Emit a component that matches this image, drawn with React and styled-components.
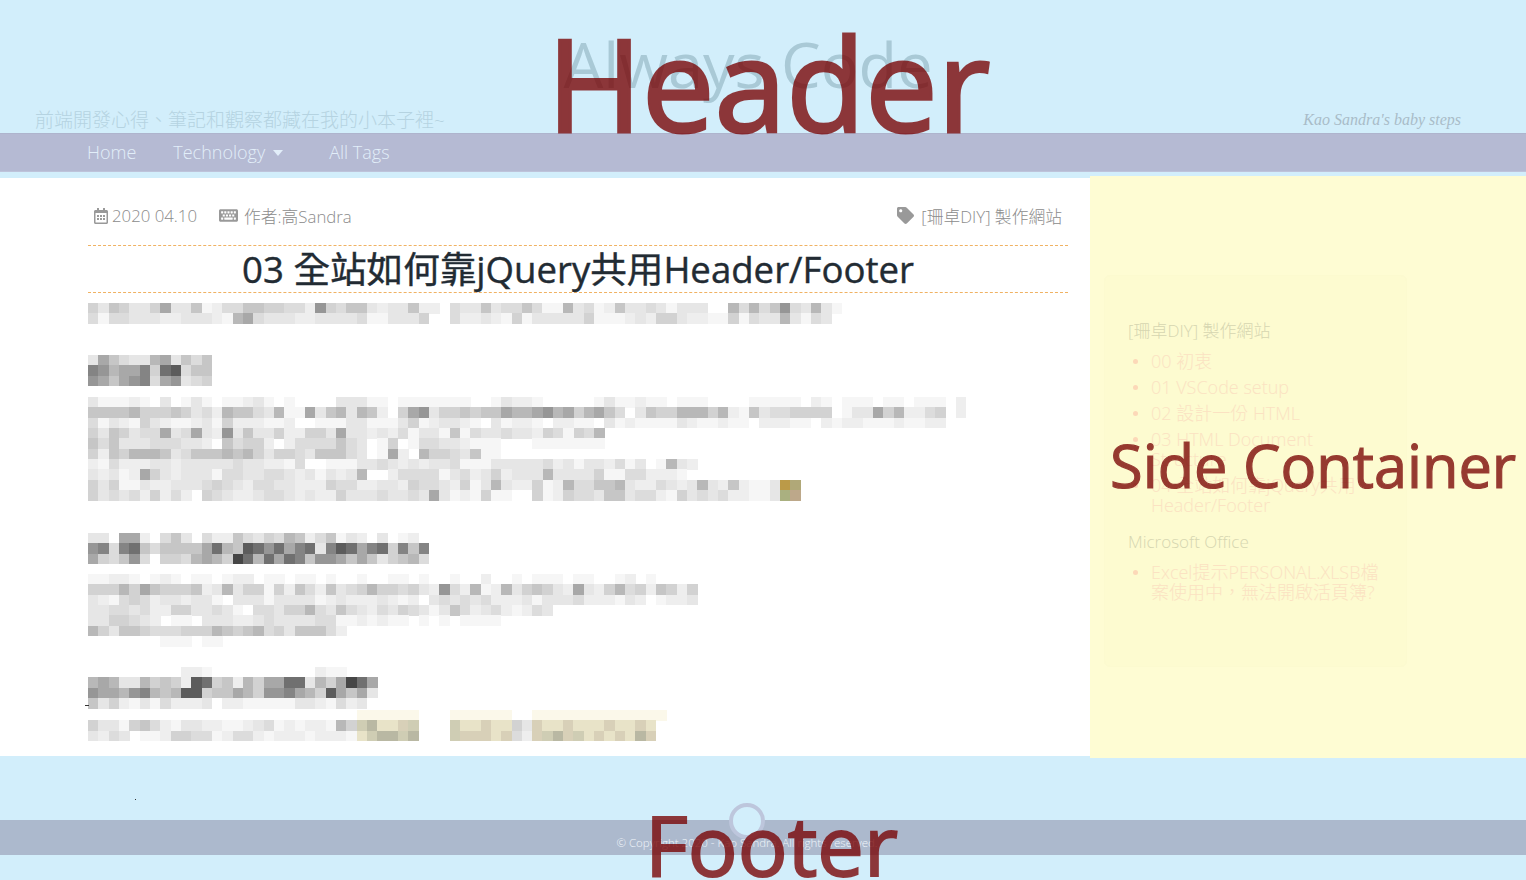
import React from "react";
import styled, { createGlobalStyle } from "styled-components";
import { FaRegCalendarAlt, FaKeyboard, FaTag } from "react-icons/fa";

const UI = `"Open Sans", "Noto Sans CJK TC", sans-serif`;

const Global = createGlobalStyle`
  html, body { margin: 0; padding: 0; background: #d2eefb; overflow: hidden; }
  body { font-family: ${UI}; }
  * { box-sizing: border-box; }
`;

const Page = styled.div`
  position: relative;
  width: 1526px;
  height: 880px;
  overflow: hidden;
  display: flex;
  flex-direction: column;
`;

const Header = styled.header`
  height: 133px;
  display: grid;
  grid-template-columns: 1fr auto 1fr;
  padding: 0 65px 0 35px;
`;
const Slogan = styled.div`
  align-self: end;
  margin-bottom: -1px;
  font-size: 19px;
  line-height: 28px;
  color: #b5d3e1;
  font-weight: 300;
  white-space: nowrap;
`;
const Brand = styled.div`
  margin-top: 26px;
  font-size: 63px;
  line-height: 76px;
  color: #a9c9d6;
  font-weight: 400;
  white-space: nowrap;
`;
const Motto = styled.div`
  align-self: end;
  justify-self: end;
  margin-bottom: -1px;
  font-family: "Liberation Serif", serif;
  font-style: italic;
  font-size: 16px;
  line-height: 28px;
  color: #a9bcc8;
  white-space: nowrap;
`;

const Nav = styled.nav`
  height: 39px;
  background: #b5bad3;
  border-top: 1px solid #aeb4cd;
  border-bottom: 1px solid #bec3da;
  display: flex;
  align-items: center;
  padding: 0 0 2px 87px;
  gap: 37px;
`;
const NavLink = styled.a`
  font-size: 18px;
  font-weight: 300;
  color: #e2eef9;
  display: flex;
  align-items: center;
  gap: 8px;
  white-space: nowrap;
`;
const Caret = styled.span`
  width: 0;
  height: 0;
  margin: 2px 9px 0 0;
  border-left: 5.5px solid transparent;
  border-right: 5.5px solid transparent;
  border-top: 6px solid #e2eef9;
`;

const Main = styled.div`
  margin-top: 6px;
  height: 578px;
  display: flex;
  background: #fff;
`;
const Article = styled.main`
  position: relative;
  width: 1090px;
  padding: 0 22px 0 88px;
`;
const Side = styled.aside`
  flex: 1;
  margin: -2px 0;
  padding: 99px 0 0 14px;
  background: #fefcd3;
`;
const SideCard = styled.div`
  width: 303px;
  height: 392px;
  padding: 44px 24px 0 23px;
  border: 1px solid #fcfacf;
  border-radius: 6px;
  background: #fdfbd0;
`;
const SideTitle = styled.div`
  font-size: 17px;
  line-height: 22px;
  color: #d6d6b0;
  font-weight: 300;
  margin-top: ${(p) => p.$before || 0}px;
  margin-bottom: 9px;
`;
const SideList = styled.ul`
  margin: 0;
  padding: 0 0 0 23px;
  list-style: none;
`;
const SideItem = styled.li`
  position: relative;
  font-size: 18px;
  line-height: 20px;
  color: #fbe2c2;
  font-weight: 300;
  margin-bottom: 6px;
  &::before {
    content: "";
    position: absolute;
    left: -18px;
    top: 8px;
    width: 5px;
    height: 5px;
    border-radius: 50%;
    background: #fcd8b8;
  }
`;

const Meta = styled.div`
  height: 68px;
  padding: 8px 6px 0 5px;
  display: flex;
  align-items: center;
  color: #8c8c8c;
  font-size: 16.8px;
  font-weight: 300;
  border-bottom: 1px dashed #f0b263;
`;
const MetaItem = styled.span`
  display: inline-flex;
  align-items: center;
  gap: ${(p) => p.$gap}px;
  margin-right: 22px;
  white-space: nowrap;
  &:last-child { margin-right: 0; margin-left: auto; }
  svg { color: #999; font-size: ${(p) => p.$icon}px; }
`;
const Title = styled.h1`
  margin: 0;
  height: 47px;
  line-height: 46px;
  font-size: 36.6px;
  font-weight: 400;
  -webkit-text-stroke: 0.4px #222b33;
  text-align: center;
  color: #222b33;
  white-space: nowrap;
  border-bottom: 1px dashed #f0b263;
`;

const MosaicSvg = styled.svg`
  display: block;
  margin-top: ${(p) => p.$top}px;
  filter: blur(0.6px);
  overflow: visible;
`;

const SHADES = {
  0: 255, 1: 246, 2: 238, 3: 230, 4: 220, 5: 210, 6: 198, 7: 184,
  8: 168, 9: 150, a: 132, b: 112, c: 92, d: 70,
};
const TINTS = {
  e: "#fbf8ea", g: "#e8e3c8", h: "#cfcdb4", i: "#b9b8a3", j: "#d8d0b8", k: "#bb9a48", l: "#b0a878", m: "#aab080", n: "#bda88a",
};
const CELL = 10.33;

function Mosaic({ top, rows }) {
  const w = Math.max(...rows.map((r) => r.length)) * CELL;
  const h = rows.length * CELL;
  return (
    <MosaicSvg $top={top} width={w} height={h} viewBox={`0 0 ${w} ${h}`} shapeRendering="crispEdges">
      {rows.flatMap((row, y) =>
        [...row].map((c, x) => {
          if (c === "0") return null;
          const fill = TINTS[c] || `rgb(${SHADES[c]},${SHADES[c]},${SHADES[c]})`;
          return <rect key={`${y}-${x}`} x={x * CELL} y={y * CELL} width={CELL + 0.3} height={CELL + 0.3} fill={fill} />;
        })
      )}
    </MosaicSvg>
  );
}

const BLOCKS = [
  { top: 10, rows: [
    "5365335833612446655442954663233622" + "043363446411734126334313330074746943731",
    "4144333223332178433322333341133350" + "042232151333335111232553221151433731430",
  ]},
  { top: 31, rows: [
    "386433783646",
    "a9788a5bc466",
    "98689a489345",
  ]},
  { top: 11, rows: [
    "3111210301310112310100003331101111111001" + "322100000131121101110000111110210111011011102",
    "6666755565342766437118367376205893556566" + "877897857864036557775721634455550133857224502",
    "4132153211231522211200111331113512332103" + "1221022110312111132112110222110212211121122",
    "5365344834832936335225538332324133161433" + "4332541547",
    "6463334443320645520244446430150144332111" + "0001111111",
    "5265777634666767535543666430182075543611",
    "21422233233333433221400111334323233411133333423133241301732",
    "3231285323331443344323132370024444134235" + "233373333511442221",
    "5351132233345432443322254422332544325137" + "322512744667322432373262113kl",
    "5343425242054322344323225333433438312151" + "100512544366344215343422113mn",
  ]},
  { top: 33, rows: [
    "330882046304226435476246132030120",
    "9a4ab6466668b76cb9b8ab3acb8ab5a6a",
    "85469405547875db7b8ba699868635674",
  ]},
  { top: 10, rows: [
    "11221012101101220110110100100110100100200101110110012010000",
    "55575865556237355152642634575545329427127356532832574526525",
    "32145423323310333133331232223212034343422231333422213201223",
    "334434225533431044355743643243543136423421243",
    "3355432011033322343333441121211010101111000000",
    "7536654445557656745366642",
    "0000000111011000",
  ]},
  { top: 21, rows: [
    "0000000002210000000000211",
    "7873375652cb5627588bb3758db8",
    "98879a767cc56687599a875c8683",
    "635213142223022111113321423",
  ]},
  { top: 1, rows: [
    "00000000000000000000000000eeeeee000eeeeee00eeeeeeeeeeeee",
    "53315642133221123412122175" + "higgjh" + "000" + "hggjgg" + "53" + "jggjgggjggjg",
    "32430112554412442122212221" + "ghiihi" + "000" + "hjjjgj" + "42" + "jhijhgjgjgij",
  ]},
];

const Label = styled.div`
  position: absolute;
  left: ${(p) => p.$x}px;
  top: ${(p) => p.$y}px;
  font-size: ${(p) => p.$size}px;
  line-height: 1;
  color: #780000;
  -webkit-text-stroke: ${(p) => p.$stroke}px #780000;
  opacity: 0.77;
  white-space: nowrap;
  font-weight: 500;
`;

const Footer = styled.footer`
  position: relative;
  flex: 1;
  padding-top: 64px;
`;
const FooterBar = styled.div`
  height: 35px;
  background: #acb9cd;
  padding: 14px 32px 0 0;
  text-align: center;
  font-size: 11.5px;
  line-height: 18px;
  font-weight: 300;
  color: #f0f5fa;
`;
const Ring = styled.div`
  position: absolute;
  left: 729px;
  top: 47px;
  width: 36px;
  height: 36px;
  border-radius: 50%;
  background: #d2eefb;
  border: 4px solid #bdc6dc;
`;
const Speck = styled.i`
  position: absolute;
  left: ${(p) => p.$x}px;
  top: ${(p) => p.$y}px;
  width: ${(p) => p.$w}px;
  height: 1px;
  background: #333;
`;

export default function App() {
  return (
    <Page>
      <Global />
      <Header>
        <Slogan>前端開發心得、筆記和觀察都藏在我的小本子裡~</Slogan>
        <Brand>Always Code</Brand>
        <Motto>Kao Sandra's baby steps</Motto>
      </Header>
      <Nav>
        <NavLink>Home</NavLink>
        <NavLink>Technology <Caret /></NavLink>
        <NavLink>All Tags</NavLink>
      </Nav>
      <Main>
        <Article>
          <Meta>
            <MetaItem $icon={16} $gap={3}><FaRegCalendarAlt />2020 04.10</MetaItem>
            <MetaItem $gap={6} $icon={19}><FaKeyboard />作者:高Sandra</MetaItem>
            <MetaItem $gap={7} $icon={17}><FaTag />[珊卓DIY] 製作網站</MetaItem>
          </Meta>
          <Title>03 全站如何靠jQuery共用Header/Footer</Title>
          {BLOCKS.map((b, i) => <Mosaic key={i} top={b.top} rows={b.rows} />)}
          <Speck $x={85} $y={527} $w={4} />
        </Article>
        <Side>
          <SideCard>
            <SideTitle>[珊卓DIY] 製作網站</SideTitle>
            <SideList>
              <SideItem>00 初衷</SideItem>
              <SideItem>01 VSCode setup</SideItem>
              <SideItem>02 設計一份 HTML</SideItem>
              <SideItem>03 HTML Document Structure</SideItem>
              <SideItem>04 全站如何靠jQuery共用 Header/Footer</SideItem>
            </SideList>
            <SideTitle $before={16}>Microsoft Office</SideTitle>
            <SideList>
              <SideItem>Excel提示PERSONAL.XLSB檔案使用中，無法開啟活頁簿?</SideItem>
            </SideList>
          </SideCard>
        </Side>
      </Main>
      <Footer>
        <Ring />
        <FooterBar>© Copyright 2020 - Kao Sandra. All rights reserved.</FooterBar>
        <Speck $x={135} $y={43} $w={1} />
      </Footer>
      <Label $x={547} $y={18} $size={129} $stroke={3}>Header</Label>
      <Label $x={1110} $y={435} $size={59.5} $stroke={1.2}>Side Container</Label>
      <Label $x={645} $y={802} $size={83} $stroke={2}>Footer</Label>
    </Page>
  );
}
